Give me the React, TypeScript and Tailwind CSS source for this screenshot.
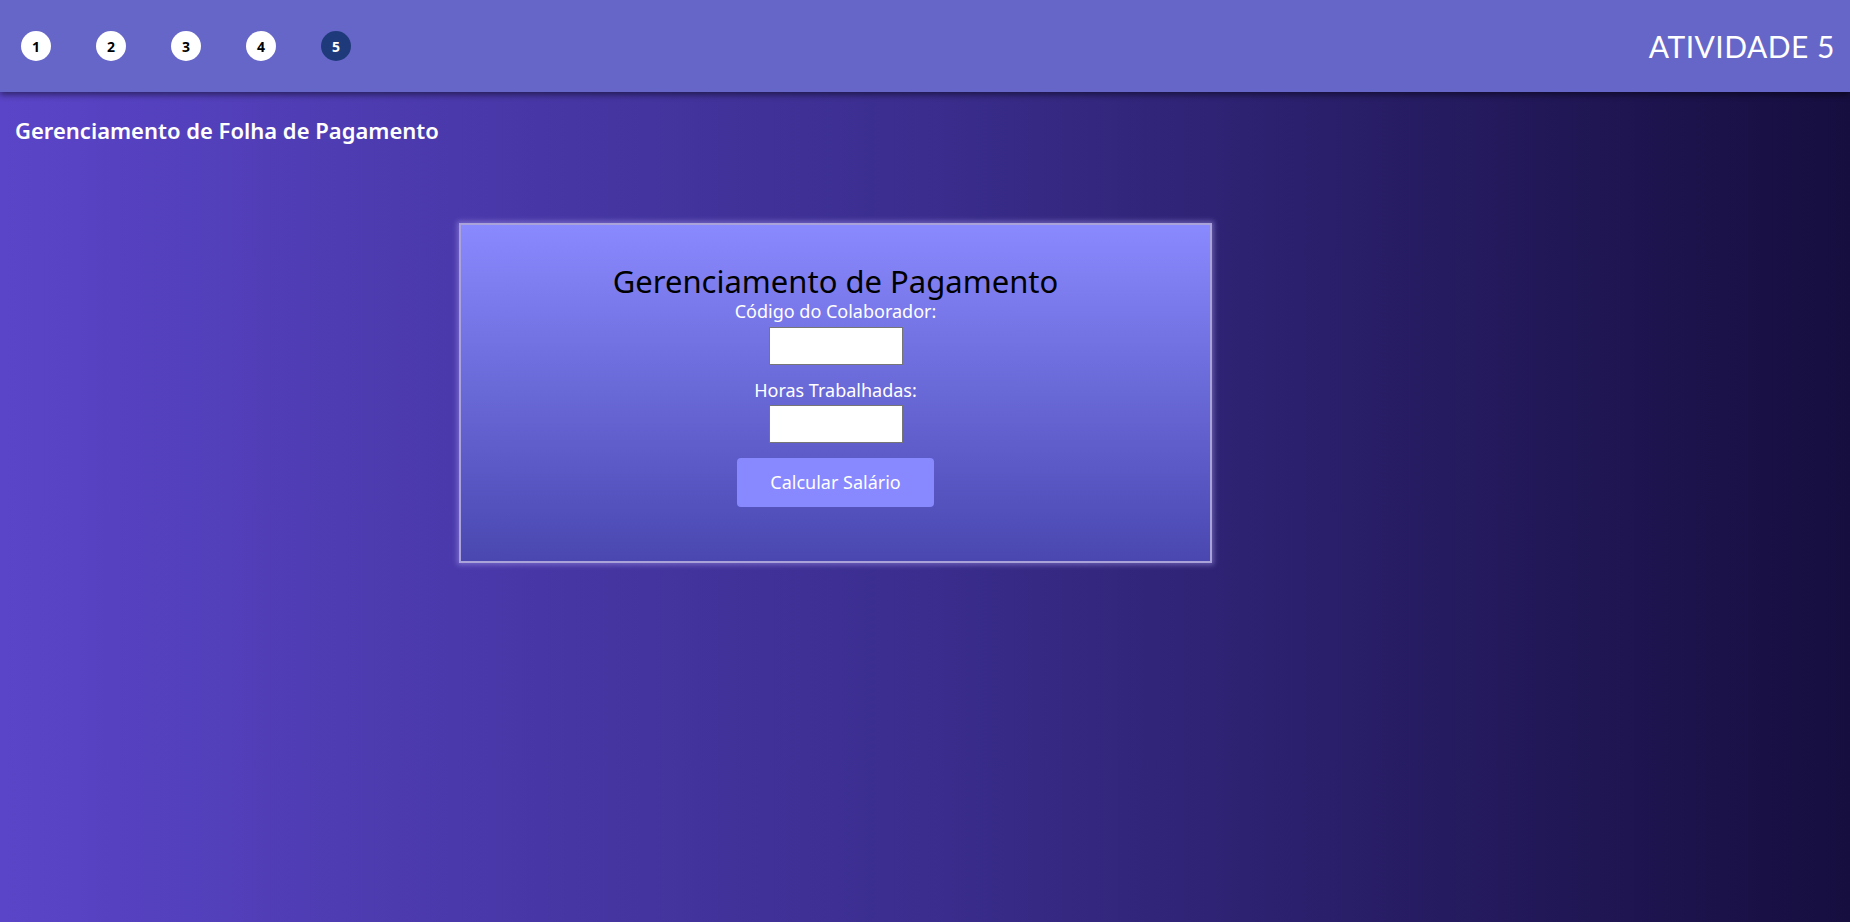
import { useState } from 'react';

const atividades = [1, 2, 3, 4, 5];

export default function App() {
  const [codigo, setCodigo] = useState('');
  const [horas, setHoras] = useState('');
  const ativa = 5;

  return (
    <div className="min-h-screen w-full bg-gradient-to-r from-[#5a45c8] via-[#3a2d8e] to-[#160e3f] font-['Noto_Sans',sans-serif] text-white">
      {/* Header */}
      <header className="h-[92px] bg-[#6666c8] flex items-center justify-between pl-[21px] pr-[15px] shadow-[0_3px_6px_rgba(0,0,0,0.45)]">
        <nav className="flex items-center gap-[45px]">
          {atividades.map((n) => (
            <button
              key={n}
              className={
                n === ativa
                  ? 'w-[30px] h-[30px] rounded-full bg-[#1f3a7a] text-white text-[14px] font-bold flex items-center justify-center'
                  : 'w-[30px] h-[30px] rounded-full bg-white text-black text-[14px] font-bold flex items-center justify-center'
              }
            >
              {n}
            </button>
          ))}
        </nav>
        <h1 className="font-['Lato',sans-serif] text-[30px] tracking-[0.5px] text-white">ATIVIDADE 5</h1>
      </header>

      <h2 className="px-[15px] pt-[22px] text-[22px] font-semibold">Gerenciamento de Folha de Pagamento</h2>

      {/* Card */}
      <div className="pl-[459px] pt-[76px]">
        <div className="w-[753px] h-[340px] border-2 border-[#aaa3d9] bg-gradient-to-b from-[#8a8aff] to-[#4a47b0] shadow-[0_0_5px_2px_rgba(170,160,240,0.45)] flex flex-col items-center pt-[37px]">
          <h3 className="text-black text-[31px] leading-[38px]">Gerenciamento de Pagamento</h3>
          <label className="text-[18px] leading-[22px]">Código do Colaborador:</label>
          <input
            value={codigo}
            onChange={(e) => setCodigo(e.target.value)}
            className="mt-[5px] w-[134px] h-[38px] bg-white border border-[#767676] text-black px-1 outline-none"
          />
          <label className="mt-[14px] text-[18px] leading-[22px]">Horas Trabalhadas:</label>
          <input
            value={horas}
            onChange={(e) => setHoras(e.target.value)}
            className="mt-[4px] w-[134px] h-[38px] bg-white border border-[#767676] text-black px-1 outline-none"
          />
          <button className="mt-[15px] w-[197px] h-[49px] rounded-[4px] bg-[#8888ff] text-white text-[18px]">
            Calcular Salário
          </button>
        </div>
      </div>
    </div>
  );
}
